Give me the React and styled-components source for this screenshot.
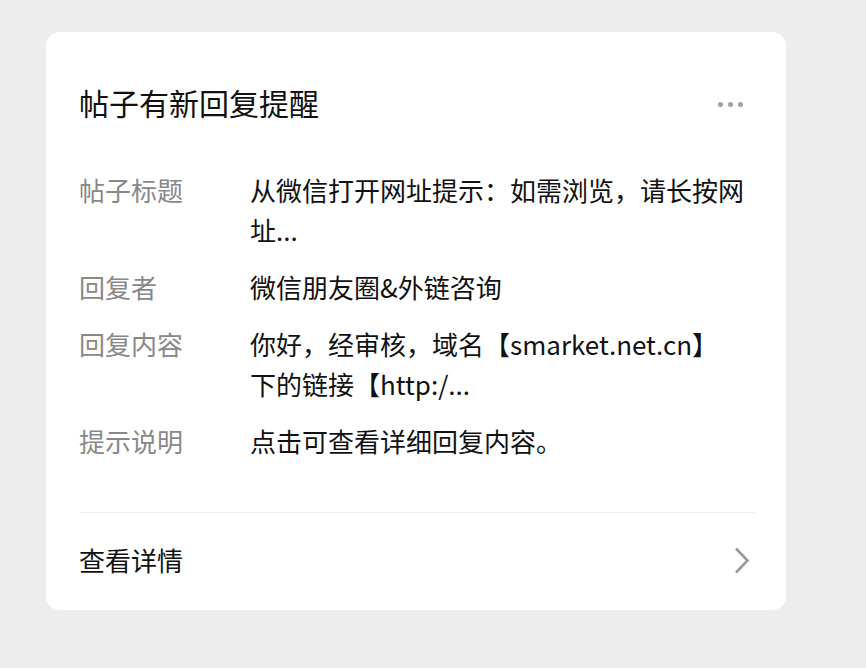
import React from "react";
import styled, { createGlobalStyle } from "styled-components";

const Global = createGlobalStyle`
  html, body { margin: 0; padding: 0; background: #ededed; }
  body { font-family: "Noto Sans CJK SC", "Noto Sans", sans-serif; }
`;

const Page = styled.div`
  min-height: 668px;
  padding: 32px 0 0 46px;
  box-sizing: border-box;
`;

const Card = styled.div`
  width: 740px;
  height: 578px;
  box-sizing: border-box;
  background: #fff;
  border-radius: 14px;
  padding: 50px 31px 0 33px;
  display: flex;
  flex-direction: column;
`;

const Header = styled.div`
  display: flex;
  align-items: center;
  justify-content: space-between;
  height: 40px;
`;

const Title = styled.div`
  font-size: 30px;
  line-height: 40px;
  color: #111;
  font-weight: 400;
`;

const Dots = styled.div`
  display: flex;
  gap: 5px;
  margin-right: 12px;
  margin-top: 4px;
`;

const Dot = styled.span`
  width: 5px;
  height: 5px;
  border-radius: 50%;
  background: #a0a0a0;
`;

const Body = styled.div`
  margin-top: 48px;
  display: flex;
  flex-direction: column;
  gap: 17px;
`;

const Row = styled.div`
  display: grid;
  grid-template-columns: 171px 1fr;
  font-size: 26px;
  line-height: 40px;
`;

const Label = styled.div`
  color: #888;
`;

const Value = styled.div`
  color: #111;
`;

const Line = styled.span`
  display: block;
  white-space: nowrap;
`;

const Divider = styled.div`
  margin-top: 51px;
  height: 1px;
  background: #efefef;
`;

const Footer = styled.div`
  flex: 1;
  display: flex;
  align-items: center;
  justify-content: space-between;
  padding-bottom: 3px;
`;

const FooterText = styled.div`
  font-size: 26px;
  line-height: 40px;
  color: #111;
`;

const Chevron = () => (
  <svg width="16" height="27" viewBox="0 0 16 27" fill="none" style={{ marginRight: 5 }}>
    <path d="M2 1.5 L13.5 13.5 L2 25.5" stroke="#9a9a9a" strokeWidth="2.6" strokeLinecap="butt" strokeLinejoin="miter" />
  </svg>
);

const rows = [
  { label: "帖子标题", lines: ["从微信打开网址提示：如需浏览，请长按网", "址..."] },
  { label: "回复者", lines: ["微信朋友圈&外链咨询"] },
  { label: "回复内容", lines: ["你好，经审核，域名【smarket.net.cn】", "下的链接【http:/..."] },
  { label: "提示说明", lines: ["点击可查看详细回复内容。"] },
];

export default function App() {
  return (
    <>
      <Global />
      <Page>
        <Card>
          <Header>
            <Title>帖子有新回复提醒</Title>
            <Dots>
              <Dot />
              <Dot />
              <Dot />
            </Dots>
          </Header>
          <Body>
            {rows.map((r) => (
              <Row key={r.label}>
                <Label>{r.label}</Label>
                <Value>
                  {r.lines.map((l) => (
                    <Line key={l}>{l}</Line>
                  ))}
                </Value>
              </Row>
            ))}
          </Body>
          <Divider />
          <Footer>
            <FooterText>查看详情</FooterText>
            <Chevron />
          </Footer>
        </Card>
      </Page>
    </>
  );
}
